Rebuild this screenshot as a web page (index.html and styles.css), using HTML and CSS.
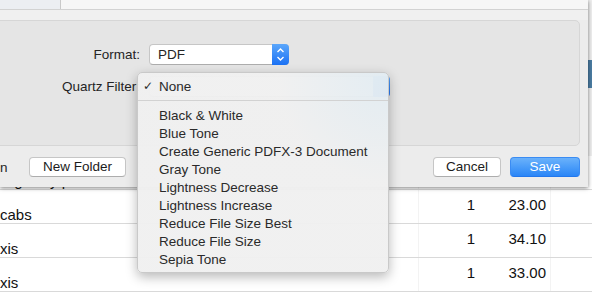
FILE: index.html
```html
<!DOCTYPE html>
<html lang="en">
<head>
    <meta charset="UTF-8">
    <title>Save as PDF</title>
    <link rel="stylesheet" href="styles.css">
</head>
<body>

<div class="backdrop">
    <div class="toolbar"><div class="accent"></div></div>
    <div class="entry"><div class="name">Highway pass</div><div class="qty"></div><div class="price"></div><div class="rest"></div></div>
    <div class="entry"><div class="name">cabs</div><div class="qty">1</div><div class="price">23.00</div><div class="rest"></div></div>
    <div class="entry"><div class="name">xis</div><div class="qty">1</div><div class="price">34.10</div><div class="rest"></div></div>
    <div class="entry"><div class="name">xis</div><div class="qty">1</div><div class="price">33.00</div><div class="rest"></div></div>
</div>

<div class="sheet">
    <div class="browser">
        <div class="sidebar"></div>
        <div class="files"></div>
    </div>
    <div class="pathbar"></div>

    <div class="options">
        <div class="opt-row">
            <div class="opt-label">Format:</div>
            <div class="popup">
                <div class="popup-value">PDF</div>
                <div class="stepper">
                    <svg width="17" height="21" viewBox="0 0 17 21">
                        <polyline points="5.5,8 8.5,5 11.5,8" fill="none" stroke="#fff" stroke-width="1.4"/>
                        <polyline points="5.5,13 8.5,16 11.5,13" fill="none" stroke="#fff" stroke-width="1.4"/>
                    </svg>
                </div>
            </div>
        </div>
        <div class="opt-row">
            <div class="opt-label">Quartz Filter:</div>
            <div class="popup wide">
                <div class="popup-value">None</div>
                <div class="stepper"></div>

                <div class="menu">
                    <div class="menu-item"><span class="mark">✓</span>None</div>
                    <div class="menu-sep"></div>
                    <div class="menu-item"><span class="mark"></span>Black &amp; White</div>
                    <div class="menu-item"><span class="mark"></span>Blue Tone</div>
                    <div class="menu-item"><span class="mark"></span>Create Generic PDFX-3 Document</div>
                    <div class="menu-item"><span class="mark"></span>Gray Tone</div>
                    <div class="menu-item"><span class="mark"></span>Lightness Decrease</div>
                    <div class="menu-item"><span class="mark"></span>Lightness Increase</div>
                    <div class="menu-item"><span class="mark"></span>Reduce File Size Best</div>
                    <div class="menu-item"><span class="mark"></span>Reduce File Size</div>
                    <div class="menu-item"><span class="mark"></span>Sepia Tone</div>
                </div>
            </div>
        </div>
    </div>

    <div class="actions">
        <span class="hint">n</span>
        <button class="btn new-folder">New Folder</button>
        <div class="spacer"></div>
        <button class="btn cancel">Cancel</button>
        <button class="btn save">Save</button>
    </div>
</div>

</body>
</html>
```

FILE: styles.css
```css
body {
    margin: 0;
    height: 298px;
    overflow: hidden;
    position: relative;
    font-family: "Liberation Sans", Arial, sans-serif;
    background: #fff;
    color: #222;
}

/* window behind the sheet */
.toolbar {
    height: 156px;
    background: #eeeeee;
    display: flex;
    justify-content: flex-end;
}

.accent {
    width: 4px;
    height: 28px;
    margin-top: 60px;
    background: #4a7ca2;
}

.entry {
    display: grid;
    grid-template-columns: 418px 62px 70px 1fr;
    height: 33px;
    border-bottom: 1px solid #d9d9d9;
    font-size: 15px;
    color: #111;
}

.entry .name {
    align-self: end;
    line-height: 17px;
}

.qty, .price {
    display: flex;
    align-items: center;
    justify-content: flex-end;
    padding-bottom: 4px;
}

.qty {
    border-left: 1px solid #f3f3f3;
    padding-right: 5px;
}

.price {
    padding-right: 4px;
}

.rest {
    border-left: 1px solid #f3f3f3;
}

/* save sheet */
.sheet {
    position: absolute;
    top: 0;
    left: 0;
    width: 588px;
    height: 187px;
    background: #ececec;
    box-shadow: 0 1px 4px rgba(0,0,0,0.5);
    font-size: 13.5px;
    color: #242424;
}

.browser {
    height: 9px;
    display: flex;
    border-bottom: 1px solid #d2d2d2;
}

.sidebar {
    width: 60px;
    background: #eceef2;
    border-right: 1px solid #c9c9c9;
}

.files {
    flex: 1;
    background: #f6f6f6;
}

.pathbar {
    height: 10px;
    background: #f0f0f0;
}

.options {
    box-sizing: border-box;
    height: 126px;
    margin: 0 8px 0 -10px;
    padding-top: 23px;
    border: 1px solid #d6d6d6;
    border-radius: 5px;
    background: #e5e5e5;
}

.opt-row {
    display: flex;
    align-items: center;
    gap: 9px;
    height: 21px;
}

.opt-row + .opt-row {
    margin-top: 11px;
}

.opt-label {
    width: 149px;
    text-align: right;
}

.popup {
    position: relative;
    display: flex;
    box-sizing: border-box;
    width: 140px;
    height: 21px;
    border: 1px solid #c6c6c6;
    border-bottom-color: #adadad;
    border-radius: 4px;
    background: #fff;
}

.popup.wide {
    width: 241px;
}

.popup-value {
    flex: 1;
    padding-left: 8px;
    line-height: 19px;
}

.stepper {
    width: 17px;
    margin: -1px -1px -1px 0;
    border-radius: 0 4px 4px 0;
    background: linear-gradient(#5ba7fb, #1b71f4);
}

.stepper svg {
    display: block;
}

.menu {
    position: absolute;
    top: -5px;
    left: -13px;
    width: 252px;
    box-sizing: border-box;
    padding: 4px 0;
    border: 1px solid #c9c9c9;
    border-radius: 5px;
    background: radial-gradient(circle at 100% 0, rgba(226,236,242,0.97) 0, rgba(240,240,240,0.97) 110px);
    box-shadow: 0 4px 12px rgba(0,0,0,0.28);
    color: #2a2a2a;
    z-index: 2;
}

.menu-item {
    display: flex;
    align-items: center;
    height: 18px;
}

.mark {
    width: 21px;
    box-sizing: border-box;
    padding-left: 5px;
    font-family: "DejaVu Sans", sans-serif;
    font-size: 12px;
}

.menu-sep {
    height: 1px;
    margin: 5px 0;
    background: #d2d2d2;
}

.actions {
    display: flex;
    align-items: center;
    margin-top: 11px;
    padding-right: 8px;
}

.hint {
    width: 8px;
}

.spacer {
    flex: 1;
}

.btn {
    box-sizing: border-box;
    height: 20px;
    padding: 0;
    border: 1px solid #c6c6c6;
    border-bottom-color: #adadad;
    border-radius: 4px;
    background: #fff;
    font: inherit;
    color: #1b1b1b;
    line-height: 18px;
    text-align: center;
}

.new-folder {
    width: 97px;
    margin-left: 21px;
}

.cancel {
    width: 68px;
}

.save {
    width: 70px;
    margin-left: 9px;
    border-color: #3b8cf3;
    border-bottom-color: #2277ec;
    background: linear-gradient(#6ab2fb, #2a86f7);
    color: #fff;
}
```
